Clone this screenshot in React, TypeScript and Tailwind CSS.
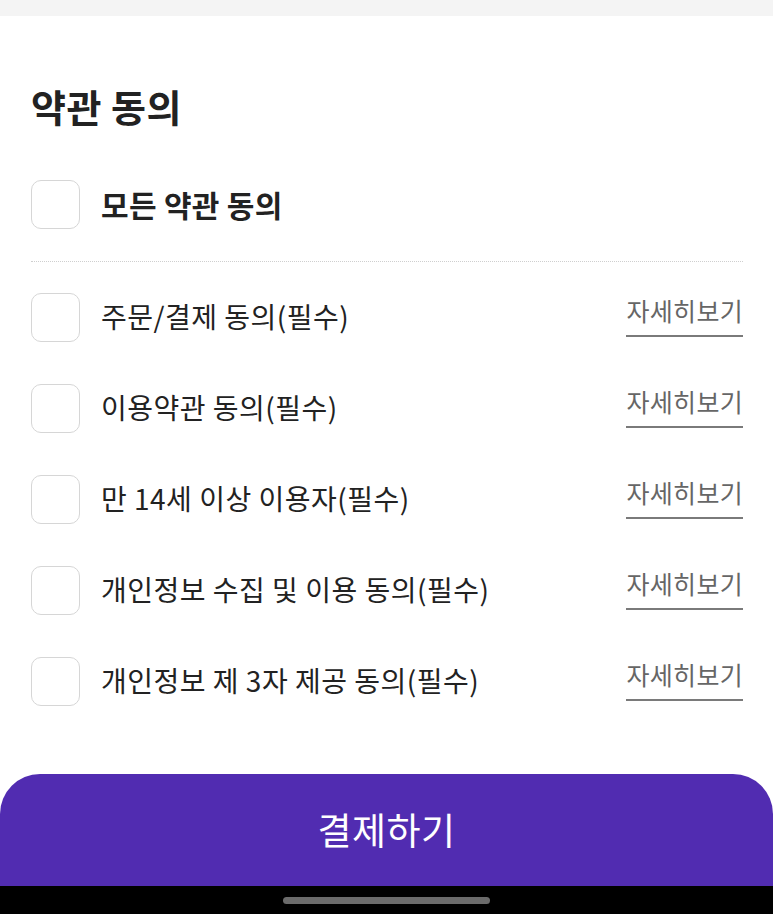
const terms = [
  "주문/결제 동의(필수)",
  "이용약관 동의(필수)",
  "만 14세 이상 이용자(필수)",
  "개인정보 수집 및 이용 동의(필수)",
  "개인정보 제 3자 제공 동의(필수)",
];

const Checkbox = () => (
  <button
    type="button"
    className="h-[49px] w-[49px] shrink-0 rounded-[10px] border-[1.5px] border-[#d6d6d6] bg-white"
  />
);

export default function App() {
  return (
    <div
      className="flex h-[914px] w-[773px] flex-col overflow-hidden bg-white text-[#222]"
      style={{ fontFamily: '"Noto Sans CJK KR", "Noto Sans", sans-serif' }}
    >
      <div className="h-4 bg-[#f4f4f4]" />

      <div className="flex flex-col pl-[31px] pr-[30px]">
        <h2 className="mt-[68px] text-[38px] leading-[44px] font-bold tracking-[0.5px]">약관 동의</h2>

        <label className="mt-[52px] flex h-[49px] items-center gap-[21px]">
          <Checkbox />
          <span className="text-[30px] leading-[36px] font-bold tracking-[0.3px]">모든 약관 동의</span>
        </label>

        <div className="mt-[32px] border-t border-dotted border-[#cfcfcf]" />

        <ul className="mt-[31px] flex flex-col gap-[42px]">
          {terms.map((term) => (
            <li key={term} className="flex h-[49px] items-center justify-between">
              <label className="flex items-center gap-[21px]">
                <Checkbox />
                <span className="-mt-[2px] text-[28px] leading-[34px] tracking-[0.5px]">{term}</span>
              </label>
              <a className="-mt-[3px] block border-b-2 border-[#7a7a7a] pb-[9px] text-[25px] leading-[32px] tracking-[0.3px] text-[#666]">
                자세히보기
              </a>
            </li>
          ))}
        </ul>
      </div>

      <button
        type="button"
        className="mt-[68px] flex h-[113px] w-full items-center justify-center rounded-t-[40px] bg-[#512cb1] text-[37px] tracking-[0.5px] text-white"
      >
        결제하기
      </button>

      <div className="flex h-[28px] items-center justify-center bg-black">
        <div className="h-[7px] w-[207px] rounded-full bg-[#6b6b6b]" />
      </div>
    </div>
  );
}
